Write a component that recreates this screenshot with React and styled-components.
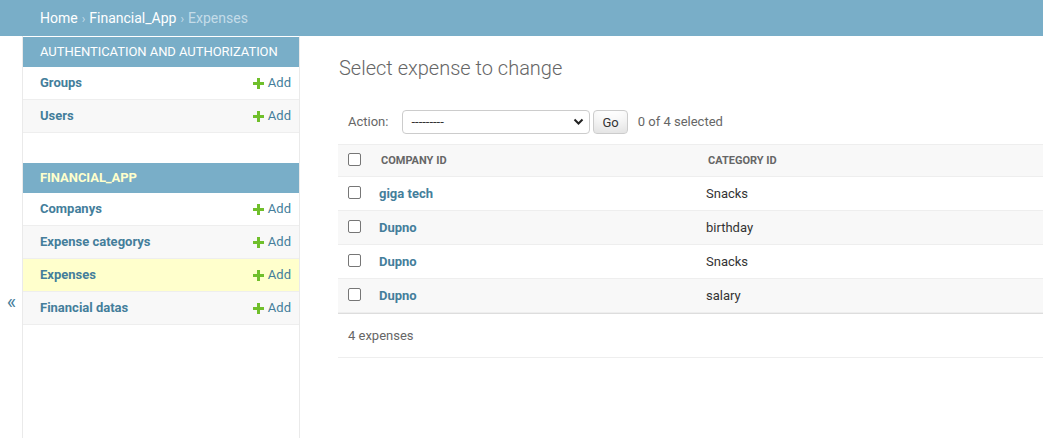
import React from "react";
import styled, { createGlobalStyle } from "styled-components";

const GlobalStyle = createGlobalStyle`
  html, body {
    margin: 0;
    padding: 0;
    background: #fff;
    overflow: hidden;
  }
  body {
    font-family: Roboto, "Liberation Sans", Arial, sans-serif;
    font-size: 14px;
    color: #333;
  }
  * { box-sizing: border-box; }
`;

const Breadcrumbs = styled.div`
  background: #79aec8;
  padding: 10px 40px;
  height: 36px;
  line-height: 16px;
  font-size: 14px;
  color: #c4dce8;
  a {
    color: #fff;
    text-decoration: none;
  }
`;

const Sep = styled.span`
  color: #c4dce8;
  margin: 0 4px;
  font-size: 12px;
`;

const Main = styled.div`
  display: flex;
  height: 402px;
`;

const Toggle = styled.div`
  flex: 0 0 23px;
  width: 23px;
  border-right: 1px solid #eaeaea;
  color: #447e9b;
  font-size: 20px;
  display: flex;
  justify-content: center;
  align-items: flex-start;
  padding-top: 254px;
  padding-left: 1px;
`;

const NavSidebar = styled.nav`
  flex: 0 0 277px;
  border-right: 1px solid #eaeaea;
  border-top: 1px solid transparent;
`;

const Module = styled.div`
  margin-bottom: 30px;
`;

const Caption = styled.div`
  background: #79aec8;
  color: ${(p) => (p.$current ? "#ffc" : "#fff")};
  font-weight: ${(p) => (p.$current ? 700 : 400)};
  font-size: 13px;
  line-height: 14px;
  letter-spacing: -0.05px;
  white-space: nowrap;
  overflow: hidden;
  text-transform: uppercase;
  padding: 8px 8px 8px 17px;
`;

const NavRow = styled.div`
  display: flex;
  justify-content: space-between;
  padding: 8px 8px 8px 17px;
  font-size: 13px;
  line-height: 16px;
  border-bottom: 1px solid #eee;
  background: ${(p) => (p.$current ? "#ffc" : p.$even ? "#f8f8f8" : "#fff")};
`;

const NavLink = styled.a`
  color: #447e9b;
  font-weight: 700;
  text-decoration: none;
`;

const AddLink = styled.a`
  display: flex;
  align-items: center;
  gap: 4px;
  color: #447e9b;
  text-decoration: none;
  svg { display: block; }
`;

const Content = styled.div`
  flex: 1;
  padding: 20px 0 20px 38px;
  min-width: 0;
`;

const Title = styled.h1`
  margin: 0 0 20px;
  font-weight: 300;
  font-size: 20px;
  line-height: 24px;
  color: #666;
  padding-left: 1px;
`;

const Actions = styled.div`
  display: flex;
  align-items: center;
  padding: 10px;
  line-height: 24px;
  color: #666;
  font-size: 13px;
`;

const Label = styled.label`
  margin-right: 14px;
`;

const Select = styled.div`
  position: relative;
  width: 188px;
  height: 24px;
  border: 1px solid #ccc;
  border-radius: 4px;
  font-size: 13px;
  color: #333;
  padding-left: 8px;
  line-height: 22px;
  svg {
    position: absolute;
    right: 5px;
    top: 7px;
  }
`;

const GoButton = styled.button`
  margin-left: 3px;
  height: 24px;
  padding: 0 8px;
  font-size: 13px;
  font-family: inherit;
  color: #333;
  background: #fff;
  border: 1px solid #ccc;
  border-radius: 4px;
  box-shadow: 0 -15px 20px -10px rgba(0, 0, 0, 0.15) inset;
`;

const Counter = styled.span`
  margin-left: 10px;
`;

const Table = styled.table`
  width: 705px;
  border-collapse: collapse;
  table-layout: fixed;
`;

const HeadCell = styled.th`
  text-align: left;
  background: #f8f8f8;
  color: #666;
  font-size: 11px;
  font-weight: 700;
  text-transform: uppercase;
  line-height: 15px;
  padding: 8px 10px;
  border-top: 1px solid #eee;
  border-bottom: 1px solid #eee;
  width: ${(p) => p.$w || "auto"};
`;

const Row = styled.tr`
  background: ${(p) => (p.$even ? "#f8f8f8" : "#fff")};
`;

const Cell = styled.td`
  font-size: 13px;
  line-height: 17px;
  padding: 8px;
  border-bottom: 1px solid #eee;
  color: #333;
  vertical-align: top;
`;

const CheckCell = styled.td`
  padding: 8px 0 8px 10px;
  border-bottom: 1px solid #eee;
  vertical-align: top;
  line-height: 17px;
  text-align: left;
`;

const CheckHead = styled(CheckCell).attrs({ as: "th" })`
  background: #f8f8f8;
  border-top: 1px solid #eee;
  line-height: 15px;
  width: 33px;
`;

const Box = styled.span`
  display: inline-block;
  width: 13px;
  height: 13px;
  border: 1px solid #767676;
  border-radius: 2px;
  background: #fff;
  vertical-align: -1px;
`;

const RowLink = styled.a`
  color: #447e9b;
  font-weight: 700;
  text-decoration: none;
`;

const Paginator = styled.p`
  margin: 0;
  width: 705px;
  font-size: 13px;
  line-height: 22px;
  padding: 11px 10px 10px;
  color: #666;
  border-top: 1px solid #ddd;
  border-bottom: 1px solid #eee;
`;

const Plus = () => (
  <svg width="11" height="11" viewBox="0 0 11 11">
    <path d="M4 0h3v4h4v3H7v4H4V7H0V4h4z" fill="#70bf2b" />
  </svg>
);

const Chevron = () => (
  <svg width="11" height="8" viewBox="0 0 11 8">
    <path d="M1.5 1.5l4 4 4-4" fill="none" stroke="#222" strokeWidth="2" />
  </svg>
);

const modules = [
  {
    name: "Authentication and Authorization",
    models: ["Groups", "Users"],
  },
  {
    name: "Financial_App",
    current: true,
    models: ["Companys", "Expense categorys", "Expenses", "Financial datas"],
  },
];

const rows = [
  ["giga tech", "Snacks"],
  ["Dupno", "birthday"],
  ["Dupno", "Snacks"],
  ["Dupno", "salary"],
];

export default function App() {
  return (
    <>
      <GlobalStyle />
      <Breadcrumbs>
        <a href="#">Home</a>
        <Sep>›</Sep>
        <a href="#">Financial_App</a>
        <Sep>›</Sep>
        Expenses
      </Breadcrumbs>
      <Main>
        <Toggle>«</Toggle>
        <NavSidebar>
          {modules.map((m) => (
            <Module key={m.name}>
              <Caption $current={m.current}>{m.name}</Caption>
              {m.models.map((name, i) => (
                <NavRow key={name} $even={i % 2 === 1} $current={name === "Expenses"}>
                  <NavLink href="#">{name}</NavLink>
                  <AddLink href="#">
                    <Plus />
                    Add
                  </AddLink>
                </NavRow>
              ))}
            </Module>
          ))}
        </NavSidebar>
        <Content>
          <Title>Select expense to change</Title>
          <Actions>
            <Label>Action:</Label>
            <Select>
              ---------
              <Chevron />
            </Select>
            <GoButton>Go</GoButton>
            <Counter>0 of 4 selected</Counter>
          </Actions>
          <Table>
            <thead>
              <tr>
                <CheckHead>
                  <Box />
                </CheckHead>
                <HeadCell $w="327px">Company ID</HeadCell>
                <HeadCell>Category ID</HeadCell>
              </tr>
            </thead>
            <tbody>
              {rows.map(([company, category], i) => (
                <Row key={i} $even={i % 2 === 1}>
                  <CheckCell>
                    <Box />
                  </CheckCell>
                  <Cell>
                    <RowLink href="#">{company}</RowLink>
                  </Cell>
                  <Cell>{category}</Cell>
                </Row>
              ))}
            </tbody>
          </Table>
          <Paginator>4 expenses</Paginator>
        </Content>
      </Main>
    </>
  );
}
